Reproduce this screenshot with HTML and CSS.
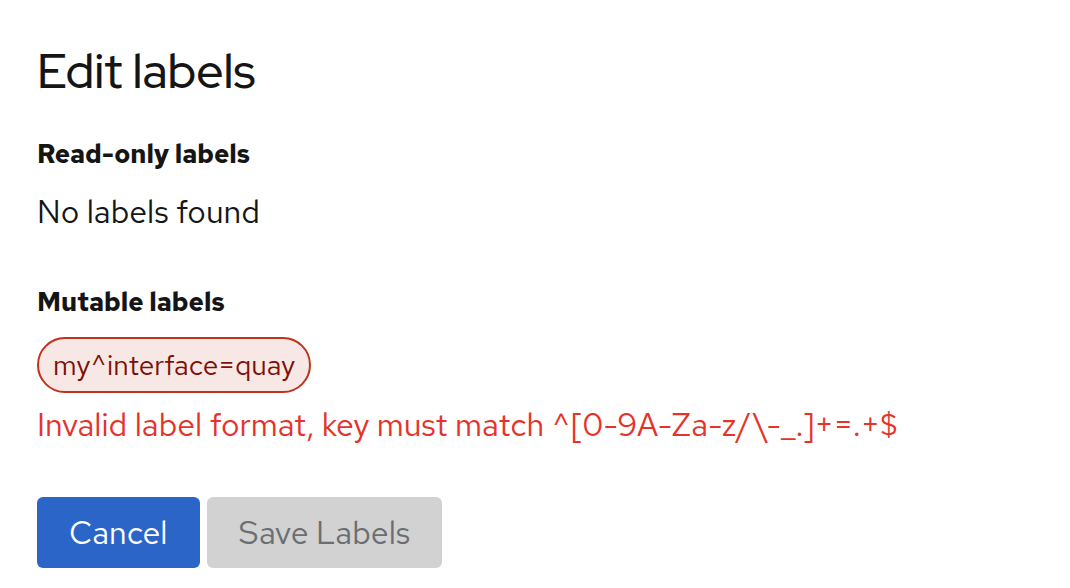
FILE: index.html
```html
<!DOCTYPE html>
<html lang="en">
<head>
<meta charset="utf-8">
<title>Edit labels</title>
<link rel="stylesheet" href="styles.css">
</head>
<body>
<main class="modal">
  <h1 class="title">Edit labels</h1>
  <section class="group">
    <h2 class="group-label">Read-only labels</h2>
    <p class="empty">No labels found</p>
  </section>
  <section class="group mutable">
    <h2 class="group-label">Mutable labels</h2>
    <div class="chips">
      <span class="chip">my^interface=quay</span>
    </div>
    <p class="error">Invalid label format, key must match ^[0-9A-Za-z/\-_.]+=.+$</p>
  </section>
  <div class="actions">
    <button class="btn btn-primary" type="button">Cancel</button>
    <button class="btn btn-disabled" type="button" disabled>Save Labels</button>
  </div>
</main>
</body>
</html>
```

FILE: styles.css
```css
* { box-sizing: border-box; }
html, body { margin: 0; padding: 0; background: #fff; }
body {
  font-family: "Red Hat Text", "Open Sans", "Liberation Sans", sans-serif;
  color: #151515;
}
.modal {
  display: flex;
  flex-direction: column;
  align-items: flex-start;
  padding: 40px 37px 0 37px;
}
.title {
  margin: 0;
  font-family: "Red Hat Display", "Open Sans", sans-serif;
  font-weight: 500;
  font-size: 48px;
  line-height: 62px;
}
.group { display: flex; flex-direction: column; align-items: flex-start; }
.group:first-of-type { margin-top: 34px; }
.group-label {
  margin: 0;
  font-size: 26px;
  font-weight: 700;
  line-height: 36px;
}
.empty {
  margin: 18px 0 0 0;
  font-size: 32px;
  line-height: 44px;
}
.mutable { margin-top: 50px; }
.chips { margin-top: 17px; display: flex; }
.chip {
  display: inline-flex;
  align-items: center;
  height: 56px;
  padding: 0 14px;
  border: 2px solid #c0321f;
  border-radius: 28px;
  background: #f8e8e5;
  color: #7d1007;
  font-size: 28px;
}
.error {
  margin: 8px 0 0 0;
  color: #e6332a;
  font-size: 32px;
  line-height: 48px;
}
.actions {
  display: flex;
  gap: 7px;
  margin-top: 48px;
}
.btn {
  height: 71px;
  border: none;
  border-radius: 6px;
  font-family: inherit;
  font-size: 32px;
  padding: 0 32px;
}
.btn-primary { background: #2b65c8; color: #fff; }
.btn-disabled { background: #d2d2d2; color: #6a6e73; }
```
